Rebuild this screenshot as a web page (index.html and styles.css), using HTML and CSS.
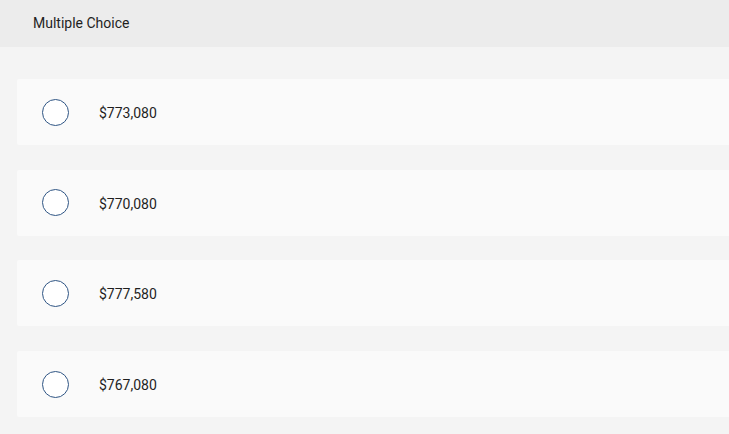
FILE: index.html
```html
<!DOCTYPE html>
<html>
<head>
<meta charset="utf-8">
<link rel="stylesheet" href="styles.css">
</head>
<body>
<div class="header">Multiple Choice</div>
<div class="choices">
  <div class="choice"><span class="radio"></span><span class="label">$773,080</span></div>
  <div class="choice"><span class="radio"></span><span class="label">$770,080</span></div>
  <div class="choice"><span class="radio"></span><span class="label">$777,580</span></div>
  <div class="choice"><span class="radio"></span><span class="label">$767,080</span></div>
</div>
</body>
</html>
```
FILE: styles.css
```css
html, body {
  margin: 0;
  padding: 0;
  background: #f4f4f4;
  font-family: Roboto, "Open Sans", sans-serif;
  color: #1f1f1f;
}
.header {
  height: 47px;
  background: #ececec;
  box-sizing: border-box;
  padding: 14px 0 0 33px;
  font-size: 14px;
  line-height: 18px;
}
.choices {
  display: flex;
  flex-direction: column;
  gap: 24.7px;
  padding: 32px 0 0 17px;
}
.choice {
  height: 66px;
  background: #fafafa;
  border-radius: 2px 0 0 2px;
  display: flex;
  align-items: center;
  padding-left: 25px;
}
.radio {
  width: 25px;
  height: 25px;
  border: 1.5px solid #2f5584;
  border-radius: 50%;
  background: #fff;
  flex: none;
}
.label {
  margin-left: 30px;
  margin-top: 2px;
  font-size: 14px;
}
```
